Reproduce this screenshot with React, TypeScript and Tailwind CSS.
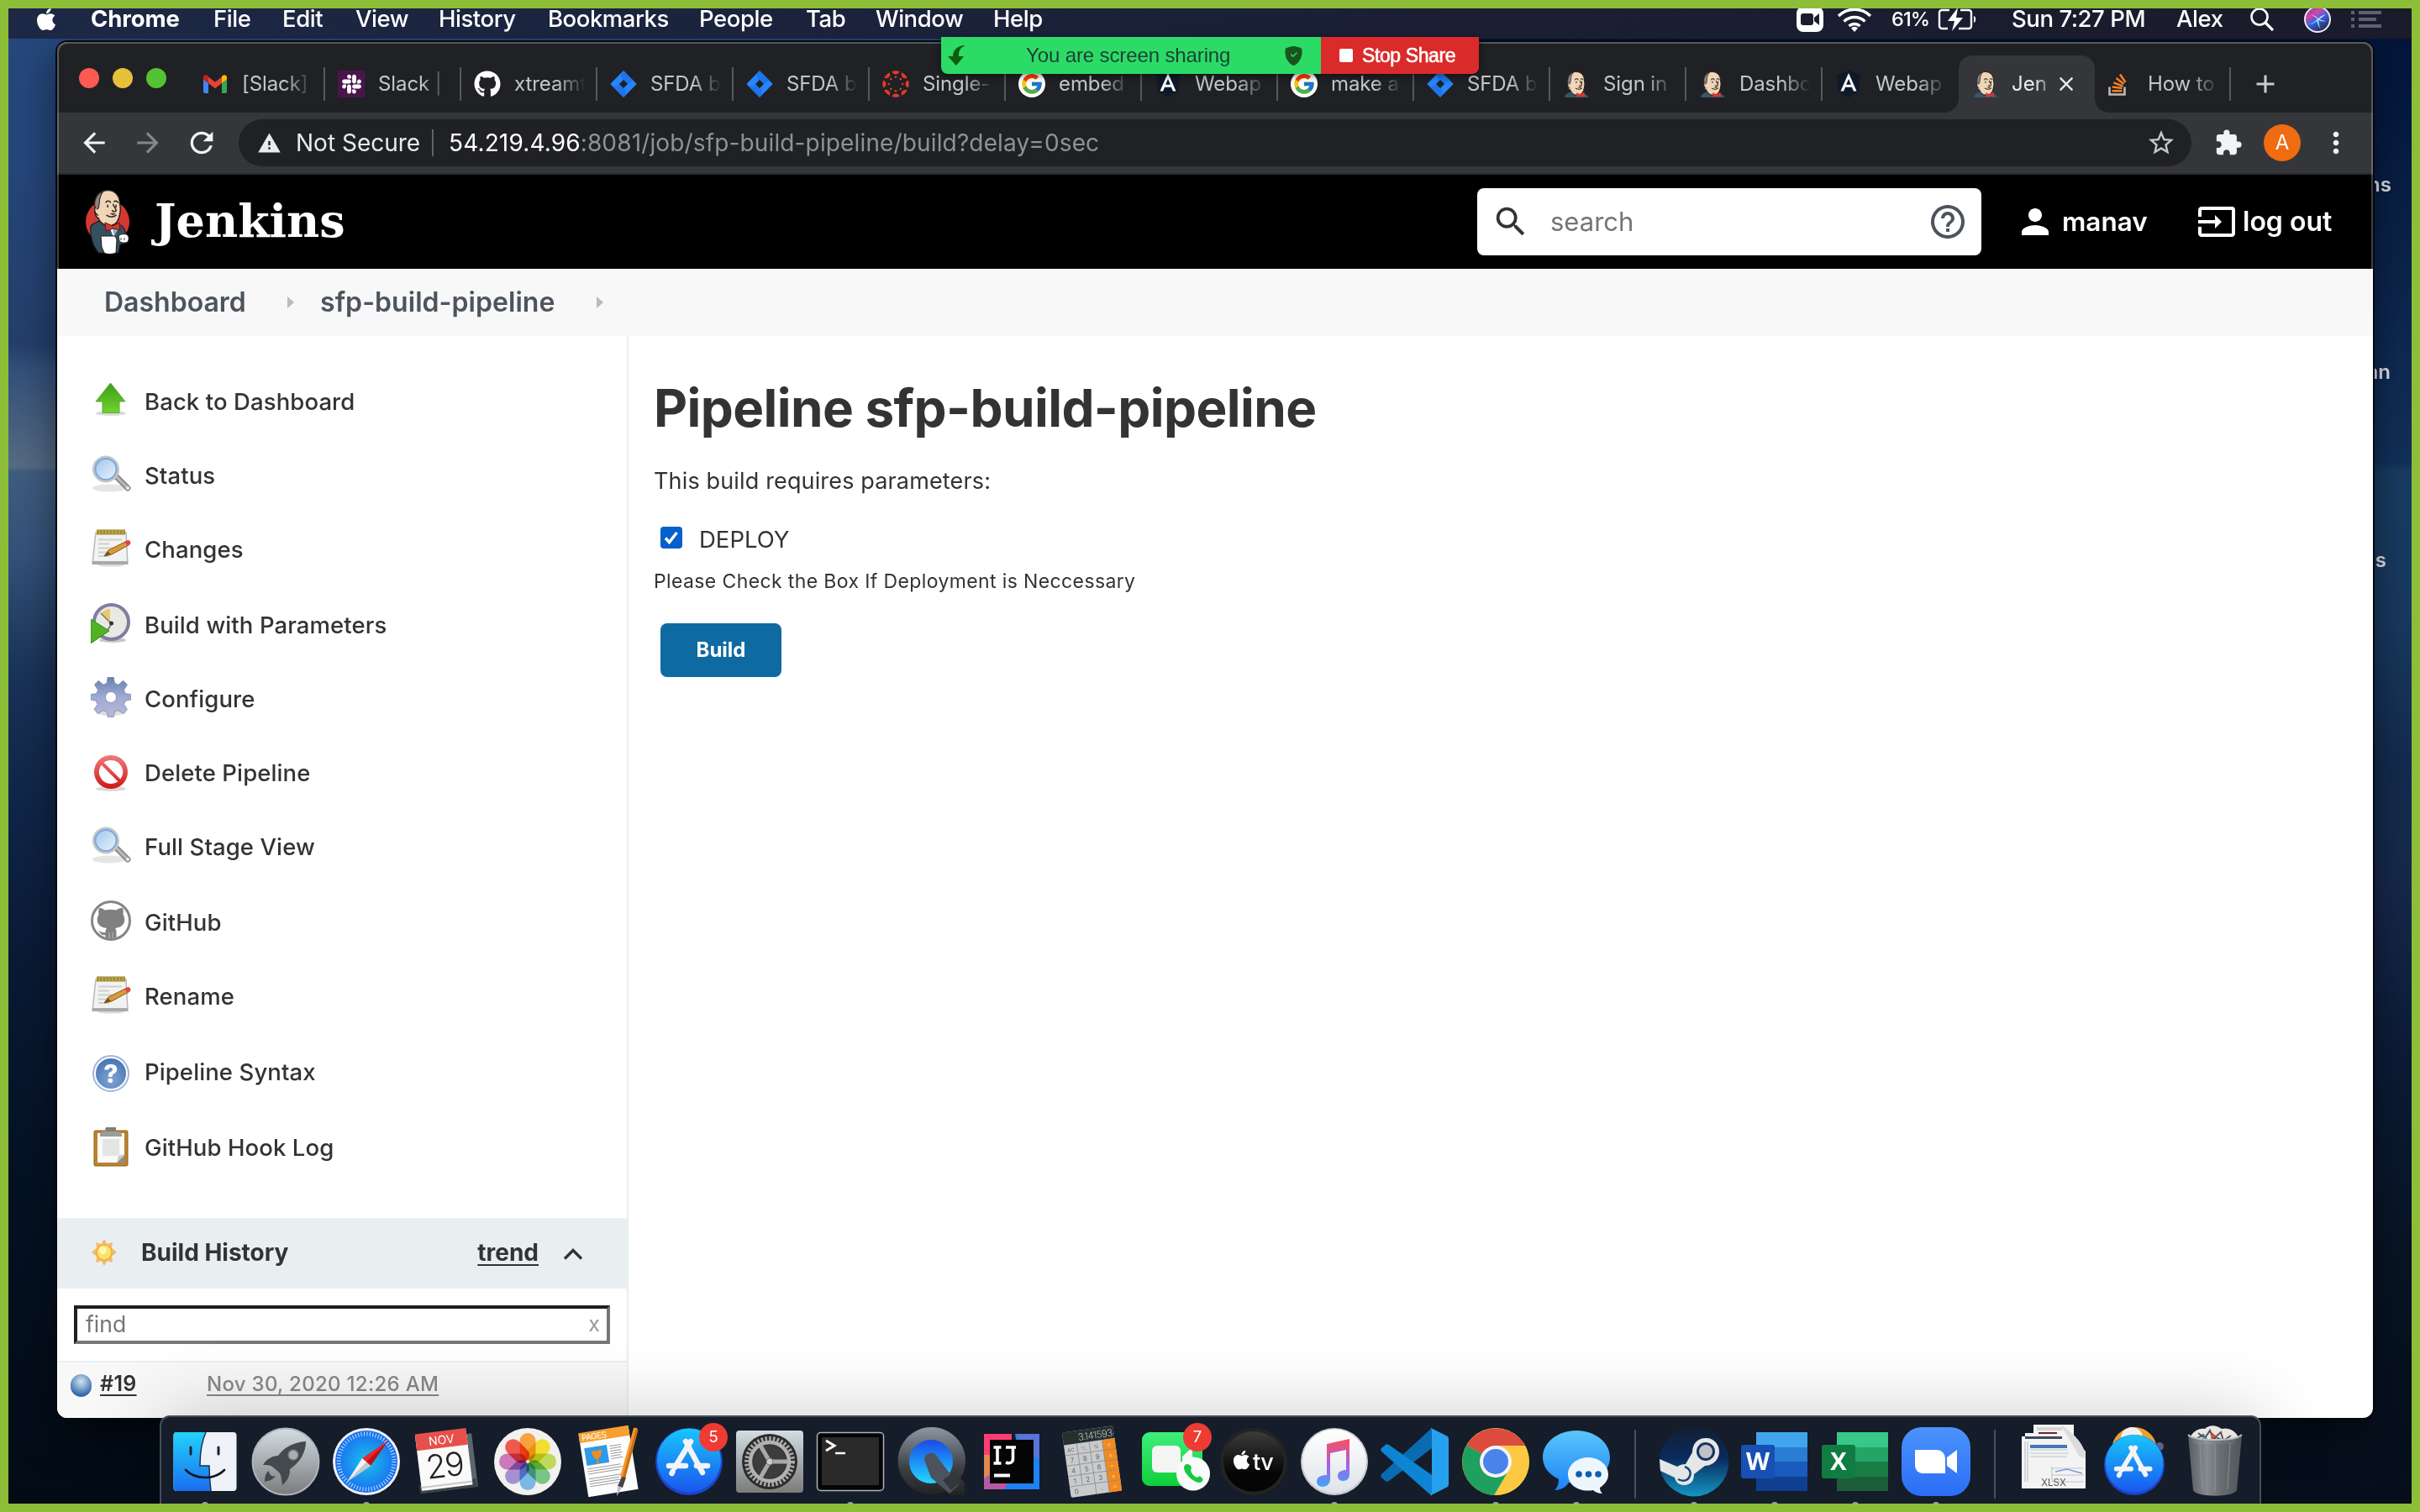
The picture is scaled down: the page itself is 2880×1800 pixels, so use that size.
import React from "react";
import { FaApple, FaGithub, FaSlack } from "react-icons/fa";
import { FcGoogle } from "react-icons/fc";
import {
  MdExtension,
  MdStarBorder,
  MdWarning,
  MdPerson,
  MdSearch,
  MdHelpOutline,
  MdInput,
  MdArrowBack,
  MdArrowForward,
  MdRefresh,
  MdClose,
  MdAdd,
  MdMoreVert,
} from "react-icons/md";
import { BsShieldFillCheck } from "react-icons/bs";

/* ---------- Small logos ---------- */

function ButlerHead() {
  return (
    <>
      <path d="M9 22c-3-8 1-19 11-20 9-1 15 5 15 14 1 4 1 8 0 12-1 6-4 11-9 12-6 1-12-2-14-8-3-1-5-6-3-10z" fill="#f0d6b7" stroke="#2b2320" strokeWidth="1.4" />
      <path d="M9 23c-3-8 0-17 8-20-3 4-4 8-4 12l-1 6z" fill="#8a8580" stroke="#2b2320" strokeWidth="1" />
      <path d="M9 20c-2 2-1 8 3 9" fill="#f0d6b7" stroke="#2b2320" strokeWidth="1.2" />
      <path d="M20 15c1-2 4-2 5 0M29 14c1-1 3-1 4 1M22 18v2M31 18v2M28 17c0 3 4 5 3 7-1 1-3 1-4 0M21 29c3 2 7 2 10 0" fill="none" stroke="#2b2320" strokeWidth="1.4" strokeLinecap="round" />
      <path d="M24 27c2-1 5-1 7 0l-3 2z" fill="#5a4a40" />
    </>
  );
}

function JenkinsFavicon() {
  return (
    <svg viewBox="0 0 44 44" className="h-8 w-8 shrink-0">
      <path d="M3 44c0-5 5-8 10-9l14 3 8 0c4 1 6 3 7 6z" fill="#34556b" />
      <ButlerHead />
      <path d="M22 36l7 3 6-4 1 8-6-1-7 2z" fill="#d33833" />
    </svg>
  );
}

function JenkinsLogo() {
  return (
    <svg viewBox="0 0 54 76" className="h-[76px] w-[54px] shrink-0">
      <ellipse cx="27" cy="38" rx="26" ry="26" fill="#d33833" />
      <path d="M7 43c3-3 7-5 11-6l18 3c7 1 11 4 12 9l2 14-8 2-2 10H16l-5-8c-3-7-5-17-4-24z" fill="#335061" stroke="#1c1a19" strokeWidth="1.2" />
      <g transform="translate(3 -1.500) scale(1.1)">
        <ButlerHead />
      </g>
      <path d="M29 44l5 12 7-12z" fill="#fff" />
      <path d="M33 45l2 11 4-11z" fill="#81b0c4" />
      <path d="M24 39l9 4 8-4 1 9-8-2-9 3z" fill="#d33833" stroke="#5a1512" strokeWidth="1" />
      <path d="M19 55h17l2 4-1 16c-5 2-10 2-14 0l-3-7z" fill="#fff" stroke="#1c1a19" strokeWidth="1" />
      <path d="M40 55c3-3 8-3 11-1 2 3 1 6 0 8-4 2-8 1-10-1z" fill="#fff" stroke="#1c1a19" strokeWidth="1" />
      <path d="M43 57v3M47 57v3" stroke="#1c1a19" strokeWidth=".8" />
    </svg>
  );
}

function GmailIcon() {
  return (
    <svg viewBox="0 0 32 32" className="h-8 w-8 shrink-0">
      <path d="M2 27V10l6 5v12H4a2 2 0 0 1-2-2z" fill="#4285f4" />
      <path d="M24 27V15l6-5v15a2 2 0 0 1-2 2z" fill="#34a853" />
      <path d="M8 7.500l8 6.200 8-6.200V15l-8 6.200L8 15z" fill="#ea4335" />
      <path d="M2 8.500C2 5.500 5 4.500 7 6l1 1v8l-6-4.500z" fill="#c5221f" />
      <path d="M30 8.500C30 5.500 27 4.500 25 6l-1 1v8l6-4.500z" fill="#fbbc04" />
    </svg>
  );
}

function JiraIcon() {
  return (
    <svg viewBox="0 0 32 32" className="h-8 w-8 shrink-0">
      <path d="M16 0l15 15.200a1 1 0 0 1 0 1.500L16 32 1 16.700a1 1 0 0 1 0-1.500z" fill="#2684ff" />
      <path d="M16 0c-4 5-3 9 0 12l4 4 8-4z" fill="#1868db" opacity=".55" />
      <path d="M16 32c4-5 3-9 0-12l-4-4-8 4z" fill="#1868db" opacity=".55" />
      <path d="M16 11l5 5-5 5-5-5z" fill="#202124" />
    </svg>
  );
}

function CanvasIcon() {
  const arcs = [0, 45, 90, 135, 180, 225, 270, 315];
  return (
    <svg viewBox="0 0 32 32" className="h-8 w-8 shrink-0">
      {arcs.map((a) => (
        <g key={a} transform={`rotate(${a} 16 16)`} fill="#e5392a">
          <path d="M11.500 1a16 16 0 0 1 9 0c-1 4.600-8 4.600-9 0z" />
          <circle cx="16" cy="7.800" r="1.300" />
        </g>
      ))}
    </svg>
  );
}

function AngularIcon() {
  return (
    <svg viewBox="0 0 32 32" className="h-8 w-8 shrink-0">
      <path d="M16 0l14 5-2 20-12 7L4 25 2 5z" fill="#0d1a2a" />
      <path d="M16 3L6.500 24.500h3.600l2-4.800h7.800l2 4.800h3.600zm0 7l2.900 6.800h-5.800z" fill="#fff" />
    </svg>
  );
}

function SlackTile() {
  return (
    <span className="flex h-8 w-8 shrink-0 items-center justify-center bg-[#4a154b]">
      <FaSlack className="h-[26px] w-[29px] text-white" />
    </span>
  );
}

function GoogleIcon() {
  return <FcGoogle className="h-8 w-8 shrink-0 rounded-full bg-white p-[2px]" />;
}

function StackIcon() {
  return (
    <svg viewBox="0 0 32 32" className="h-8 w-8 shrink-0">
      <path d="M2.500 19.500v9h18v-9" fill="none" stroke="#bcbbbb" strokeWidth="2.600" />
      <path d="M5.500 24.300h12M5.800 19.500l11.800 1.600M7.300 14.300l11 4.200M10.500 9l9 7M15 4.500l6.500 9.500" stroke="#f48024" strokeWidth="2.500" />
    </svg>
  );
}

/* ---------- Menu bar ---------- */

function MenuItem({ label, className }: { label: string; className: string }) {
  return <span className={`shrink-0 whitespace-nowrap ${className}`}>{label}</span>;
}

function MenuBar() {
  return (
    <div className="flex h-[46px] w-full items-start bg-gradient-to-r from-[#1c2845] via-[#1a2037] to-[#1a1b2a] pl-[40px] pr-[46px] text-[27.5px] font-medium tracking-[-0.45px] text-white">
      <div className="flex h-[45px] items-center">
        <FaApple className="mr-[38px] h-[30px] w-[30px] shrink-0" />
        <MenuItem label="Chrome" className="w-[146px] font-bold tracking-[-0.1px]" />
        <MenuItem label="File" className="w-[82px]" />
        <MenuItem label="Edit" className="w-[87px]" />
        <MenuItem label="View" className="w-[99px]" />
        <MenuItem label="History" className="w-[130px]" />
        <MenuItem label="Bookmarks" className="w-[180px]" />
        <MenuItem label="People" className="w-[127px]" />
        <MenuItem label="Tab" className="w-[83px]" />
        <MenuItem label="Window" className="w-[140px]" />
        <MenuItem label="Help" className="w-[80px]" />
      </div>
      <div className="ml-auto flex h-[45px] items-center">
        <svg viewBox="0 0 32 30" className="mr-[16px] h-[30px] w-8">
          <rect width="32" height="30" rx="8" fill="#fff" />
          <rect x="5" y="8" width="15" height="14" rx="3" fill="#1a1d30" />
          <path d="M21 13l6-5v14l-6-5z" fill="#1a1d30" />
        </svg>
        <svg viewBox="0 0 42 30" className="mr-[23px] h-[30px] w-[42px]">
          <path d="M2 11a27 27 0 0 1 38 0M8.500 17.500a18 18 0 0 1 25 0M14.500 23a9.500 9.500 0 0 1 13 0" fill="none" stroke="#fff" strokeWidth="3.400" />
          <path d="M21 30l-4-4.500a5.500 5.500 0 0 1 8 0z" fill="#fff" />
        </svg>
        <span className="mr-[10px] w-[45px] whitespace-nowrap text-[23.5px] tracking-[-0.9px]">61%</span>
        <svg viewBox="0 0 46 28" className="mr-[42px] h-7 w-[46px]">
          <path d="M14 3H5a3 3 0 0 0-3 3v16a3 3 0 0 0 3 3h7M27 3h10a3 3 0 0 1 3 3v16a3 3 0 0 1-3 3H25" fill="none" stroke="#fff" strokeWidth="2.400" />
          <path d="M24 0L12 16h8l-3 12 13-16h-8z" fill="#fff" />
          <path d="M43 10c3 1 3 7 0 8z" fill="#fff" />
        </svg>
        <span className="w-[196px] whitespace-nowrap">Sun 7:27 PM</span>
        <span className="w-[88px] whitespace-nowrap">Alex</span>
        <svg viewBox="0 0 28 28" className="mr-[36px] h-7 w-7">
          <circle cx="11" cy="11" r="9.500" fill="none" stroke="#fff" strokeWidth="2.600" />
          <path d="M18 18l9 9" stroke="#fff" strokeWidth="3.200" />
        </svg>
        <svg viewBox="0 0 32 32" className="mr-[24px] h-8 w-8">
          <defs>
            <linearGradient id="siri" x1="0" y1="0" x2=".6" y2="1">
              <stop offset="0" stopColor="#5a2fd0" />
              <stop offset=".35" stopColor="#d8459c" />
              <stop offset=".6" stopColor="#3a60e8" />
              <stop offset="1" stopColor="#2a2a50" />
            </linearGradient>
          </defs>
          <circle cx="16" cy="16" r="15" fill="url(#siri)" stroke="#eceaf4" strokeWidth="2" />
          <path d="M5 22c6-1 9-4 11-7 3 1 7 3 11 3-5 1-8 0-10-1 1 4 1 8 3 11-3-4-4-7-5-10-3 3-6 4-10 4z" fill="#7ff0f0" />
          <path d="M17 5c0 4-1 8-1 11 2-3 6-5 10-6-3 3-7 5-9 7-2-3-5-5-9-6 3 0 6 1 8 3z" fill="#f4d6ff" opacity=".85" />
        </svg>
        <svg viewBox="0 0 36 22" className="h-[22px] w-9" fill="#5c6174">
          <path d="M0 1h4v4H0zM9 1h27v4H9zM0 9h4v4H0zM9 9h21v4H9zM0 17h4v4H0zM9 17h27v4H9z" />
        </svg>
      </div>
    </div>
  );
}

/* ---------- Browser ---------- */

const tabs: { icon: React.ReactNode; title: string }[] = [
  { icon: <GmailIcon />, title: "[Slack]" },
  { icon: <SlackTile />, title: "Slack |" },
  { icon: <FaGithub className="h-8 w-8 shrink-0 text-white" />, title: "xtreamt" },
  { icon: <JiraIcon />, title: "SFDA b" },
  { icon: <JiraIcon />, title: "SFDA b" },
  { icon: <CanvasIcon />, title: "Single-" },
  { icon: <GoogleIcon />, title: "embed" },
  { icon: <AngularIcon />, title: "Webap" },
  { icon: <GoogleIcon />, title: "make a" },
  { icon: <JiraIcon />, title: "SFDA b" },
  { icon: <JenkinsFavicon />, title: "Sign in" },
  { icon: <JenkinsFavicon />, title: "Dashbo" },
];

function TabTitle({ title }: { title: string }) {
  return (
    <span className="ml-4 w-[92px] shrink-0 whitespace-nowrap text-[24px] tracking-[-0.1px] text-[#c3c6ca] [mask-image:linear-gradient(to_right,#000_55%,transparent_92%)]">
      {title}
    </span>
  );
}

function Tab({ icon, title, last }: { icon: React.ReactNode; title: string; last?: boolean }) {
  return (
    <div className="flex h-[68px] w-[162px] shrink-0 items-center pl-[15px]">
      {icon}
      <TabTitle title={title} />
      {!last && <span className="ml-auto h-10 w-[2px] shrink-0 bg-[#56585c]" />}
    </div>
  );
}

function TabStrip() {
  return (
    <div className="flex h-[84px] items-end bg-[#202124] pl-[26px]">
      <div className="mb-[29px] flex gap-4">
        <span className="h-6 w-6 rounded-full bg-[#ff5a52]" />
        <span className="h-6 w-6 rounded-full bg-[#e6c03a]" />
        <span className="h-6 w-6 rounded-full bg-[#53c234]" />
      </div>
      <div className="ml-[27px] flex">
        {tabs.map((t, i) => (
          <Tab key={i} icon={t.icon} title={t.title} />
        ))}
        <Tab icon={<AngularIcon />} title="Webap" last />
        <div className="relative flex h-[68px] w-[162px] shrink-0 items-center rounded-t-2xl bg-[#35363a] pl-[16px]">
          <span className="absolute -left-4 bottom-0 h-4 w-4 bg-[radial-gradient(circle_at_0_0,#202124_15.5px,#35363a_16px)]" />
          <span className="absolute -right-4 bottom-0 h-4 w-4 bg-[radial-gradient(circle_at_100%_0,#202124_15.5px,#35363a_16px)]" />
          <JenkinsFavicon />
          <span className="ml-[15px] w-[44px] whitespace-nowrap text-[24px] text-[#e8eaed] [mask-image:linear-gradient(to_right,#000_65%,transparent_115%)]">
            Jen
          </span>
          <MdClose className="ml-[7px] h-[28px] w-[28px] text-[#e8eaed]" />
        </div>
        <Tab icon={<StackIcon />} title="How to" />
      </div>
      <MdAdd className="mb-[16px] ml-[23px] h-9 w-9 text-[#c9ccd0]" />
    </div>
  );
}

function Toolbar() {
  return (
    <div className="flex h-[74px] items-start border-b-2 border-[#28292c] bg-[#35363a] text-[28px]">
      <div className="flex h-[72px] w-full items-center pl-[25px]">
        <MdArrowBack className="h-[38px] w-[38px] text-[#f1f3f4]" />
        <MdArrowForward className="ml-[26px] h-[38px] w-[38px] text-[#85878a]" />
        <MdRefresh className="ml-[25px] h-[40px] w-[40px] text-[#f1f3f4]" />
        <div className="ml-[24px] flex h-14 w-[2324px] items-center rounded-full bg-[#202124] pl-[22px]">
          <MdWarning className="h-[29px] w-[29px] text-[#e8eaed]" />
          <span className="ml-[17px] w-[147px] whitespace-nowrap text-[#e8eaed]">Not Secure</span>
          <span className="ml-[15px] h-8 w-[2px] bg-[#5f6368]" />
          <span className="ml-[18px] whitespace-nowrap tracking-[0.14px] text-[#8f9296]">
            <span className="text-white">54.219.4.96</span>:8081/job/sfp-build-pipeline/build?delay=0sec
          </span>
          <MdStarBorder className="ml-auto mr-[18px] h-9 w-9 text-[#c4c7ca]" />
        </div>
        <MdExtension className="ml-[27px] h-[34px] w-[34px] text-[#f1f3f4]" />
        <span className="ml-[25px] flex h-11 w-11 items-center justify-center rounded-full bg-[#ef6c11] text-[24px] text-white">A</span>
        <MdMoreVert className="ml-[22px] h-10 w-10 text-[#f1f3f4]" />
      </div>
    </div>
  );
}

/* ---------- Jenkins page ---------- */

function JenkinsHeader() {
  return (
    <div className="flex h-[112px] items-center bg-black text-white">
      <div className="flex items-center pl-[33px]">
        <JenkinsLogo />
        <span className="-mt-[2px] ml-[29px] whitespace-nowrap font-['DejaVu_Serif',serif] text-[54px] font-bold leading-[60px]">
          Jenkins
        </span>
      </div>
      <div className="ml-auto flex h-20 w-[600px] items-center rounded-lg bg-white pl-[17px] pr-[16px]">
        <MdSearch className="h-[46px] w-[46px] text-[#333]" />
        <span className="ml-[24px] text-[31px] text-[#757575]">search</span>
        <MdHelpOutline className="ml-auto h-[48px] w-[48px] text-[#4d545d]" />
      </div>
      <div className="ml-[40px] flex w-[218px] items-center">
        <MdPerson className="h-12 w-12" />
        <span className="ml-[8px] text-[31.5px] font-semibold">manav</span>
      </div>
      <div className="flex w-[208px] items-center">
        <MdInput className="-ml-[2px] h-12 w-12" />
        <span className="ml-[7px] whitespace-nowrap text-[32px] font-semibold">log out</span>
      </div>
    </div>
  );
}

function Breadcrumbs() {
  return (
    <div className="flex h-20 items-center bg-[#f8f8f8] pl-[56px] text-[32px] font-semibold text-[#4d545d]">
      <span className="w-[218px]">Dashboard</span>
      <svg viewBox="0 0 8 14" className="h-[14px] w-2" fill="#bbb"><path d="M0 0l8 7-8 7z" /></svg>
      <span className="ml-[31px] w-[329px] whitespace-nowrap tracking-[0.05px]">sfp-build-pipeline</span>
      <svg viewBox="0 0 8 14" className="h-[14px] w-2" fill="#bbb"><path d="M0 0l8 7-8 7z" /></svg>
    </div>
  );
}

const icon48 = "h-12 w-12 shrink-0 -translate-y-[2px]";

function UpArrow() {
  return (
    <svg viewBox="0 0 48 48" className={icon48}>
      <defs>
        <linearGradient id="up" x1="0" y1="0" x2="0" y2="1">
          <stop offset="0" stopColor="#3f9b1c" />
          <stop offset="1" stopColor="#6fd52a" />
        </linearGradient>
      </defs>
      <ellipse cx="24" cy="40" rx="18" ry="3" fill="#000" opacity=".14" />
      <path d="M23.500 4L41 26h-7v13.500H14V26H6z" fill="url(#up)" stroke="#5aa83a" strokeWidth="1" />
    </svg>
  );
}

function Magnifier() {
  return (
    <svg viewBox="0 0 48 48" className={icon48}>
      <defs>
        <linearGradient id="lens" x1="0" y1="0" x2="1" y2="1">
          <stop offset="0" stopColor="#9cc4ec" />
          <stop offset="1" stopColor="#eef5fd" />
        </linearGradient>
      </defs>
      <ellipse cx="22" cy="41" rx="20" ry="4.500" fill="#000" opacity=".1" />
      <path d="M31 28l13 13" stroke="#8c8c8c" strokeWidth="7" strokeLinecap="round" />
      <path d="M30 27l13 13" stroke="#b9b9b9" strokeWidth="3" strokeLinecap="round" />
      <circle cx="44" cy="41" r="2" fill="#eee" />
      <circle cx="18" cy="18.500" r="14" fill="url(#lens)" stroke="#c4c6c8" strokeWidth="4" />
      <circle cx="18" cy="18.500" r="12.500" fill="none" stroke="#7ba7dc" strokeWidth="2" />
    </svg>
  );
}

function Notepad() {
  return (
    <svg viewBox="0 0 48 48" className={icon48}>
      <ellipse cx="24" cy="44.500" rx="16" ry="2" fill="#000" opacity=".15" />
      <path d="M6 6h36l2 37H2z" fill="#f2f2f2" stroke="#b8b8b8" strokeWidth="1.500" />
      <path d="M2 40h42v4H2z" fill="#a9a9a9" />
      <path d="M7 2.500h34v6H7z" fill="#a08c36" />
      <path d="M10 2v7M14 2v7M18 2v7M22 2v7M26 2v7M30 2v7M34 2v7M38 2v7" stroke="#c4b25c" strokeWidth="1.200" />
      <path d="M9 14.500h28M9 19.500h13M9 24.500h18M9 29.500h9M9 34h13" stroke="#cfcfcf" strokeWidth="1.800" />
      <path d="M16 34l5-7 20-10 4 4-20 11z" fill="#d9983c" stroke="#8a5a18" strokeWidth="1" />
      <path d="M40 17l4-2c3 0 4 3 3 5l-3 2z" fill="#e04343" />
      <path d="M16 34l4-6 4 4z" fill="#6b5527" />
    </svg>
  );
}

function BuildClock() {
  return (
    <svg viewBox="0 0 48 48" className={icon48}>
      <ellipse cx="26" cy="44" rx="16" ry="3" fill="#000" opacity=".22" />
      <circle cx="24.500" cy="22.500" r="20.500" fill="#e9e9e4" stroke="#7f7da0" strokeWidth="4" />
      <path d="M23 23L12 12c3-3 7-5 11-5z" fill="#e6ca6a" />
      <path d="M12 12l12 12" stroke="#777" strokeWidth="1.500" />
      <circle cx="24.500" cy="24" r="2.500" fill="#333" />
      <path d="M24 26l-4 6" stroke="#666" strokeWidth="1.500" />
      <path d="M0 19l22 14L0 48z" fill="#4fb324" stroke="#378a14" strokeWidth="1" />
    </svg>
  );
}

function Gear() {
  return (
    <svg viewBox="0 0 48 48" className={icon48}>
      <defs>
        <linearGradient id="gear" x1="0" y1="0" x2="0" y2="48" gradientUnits="userSpaceOnUse">
          <stop offset="0" stopColor="#6680ae" />
          <stop offset=".5" stopColor="#9eabd4" />
          <stop offset="1" stopColor="#bbb7d8" />
        </linearGradient>
      </defs>
      <ellipse cx="24" cy="42" rx="18" ry="4" fill="#000" opacity=".13" />
      <path
        d="M20.200 0h7l1.300 7.200 4.400 2 5.600-5 5 4.800-4 6.500 1.700 4.300 6.800.7v6.500l-6.500 1.300-2 4.200 4 6-4.800 5-6.200-3.800-4 1.700-1.200 6.100h-7l-1.200-6.100-4.200-1.700-6.200 3.800-4.700-5 4-6-2-4.200L0 27v-6.500l6.800-.7 1.700-4.300-4-6.500 4.800-4.800 5.700 5 4.200-2zM24 17.500a6.500 6.500 0 1 0 0 13 6.500 6.500 0 0 0 0-13z"
        fill="url(#gear)"
        fillRule="evenodd"
        stroke="#7d88b0"
        strokeWidth=".8"
      />
    </svg>
  );
}

function NoEntry() {
  return (
    <svg viewBox="0 0 48 48" className={icon48}>
      <defs>
        <linearGradient id="no" x1="0" y1="0" x2="0" y2="1">
          <stop offset="0" stopColor="#ee7b7b" />
          <stop offset="1" stopColor="#cf1717" />
        </linearGradient>
      </defs>
      <ellipse cx="24" cy="45" rx="18" ry="3" fill="#000" opacity=".15" />
      <path d="M24 5a20 20 0 1 0 0 40 20 20 0 0 0 0-40zm0 6c3 0 6 1 8.600 2.800L12.800 33.600A14 14 0 0 1 24 11zm0 28c-3 0-6-1-8.300-2.700l19.600-19.600A14 14 0 0 1 24 39z" transform="matrix(-1 0 0 1 48 0)" fill="url(#no)" />
    </svg>
  );
}

function OctocatBadge() {
  return (
    <span className="flex h-12 w-12 shrink-0 -translate-y-[2px] items-center justify-center overflow-hidden rounded-full border-[3px] border-[#858585] bg-white">
      <svg viewBox="0 0 42 42" className="h-[42px] w-[42px]" fill="#808080">
        <path d="M7 6c3-.500 5 1 7 2.500 4-1 9-1 13 0C29 7 32 5.500 35 6c1 3 1 5 .5 7.500C40 22 36 29 26 30c1.500 2 1.500 4 1.500 5v7h-13v-4c-5 1-6-2-8-5 2 0 3 3 8 2 0-2 .5-4 1.500-5C6 29 2 22 6.500 13.500 6 11 6 9 7 6z" />
        <path d="M19 35v7M23 35v7" stroke="#bbb" strokeWidth="1" />
      </svg>
    </span>
  );
}

function HelpBadge() {
  return (
    <span className="flex h-12 w-12 shrink-0 translate-y-[2px] items-center justify-center">
      <span className="flex h-[44px] w-[44px] items-center justify-center rounded-full border-2 border-[#9db6d8] bg-white p-[2px]">
        <span className="flex h-full w-full items-center justify-center rounded-full bg-[radial-gradient(circle_at_50%_70%,#7fa6d8,#3c67a8)] text-[30px] font-extrabold text-white">?</span>
      </span>
    </span>
  );
}

function Clipboard() {
  return (
    <svg viewBox="0 0 48 48" className="h-12 w-12 shrink-0">
      <rect x="4" y="4" width="40" height="42" rx="1.500" fill="#b9822f" stroke="#946216" strokeWidth="1" />
      <path d="M8 7h32v35H8z" fill="#fafafa" />
      <path d="M14 14h20v20H14z" fill="#e4e4e4" />
      <path d="M40 33l-9 9h9z" fill="#8d8f8a" />
      <path d="M31 42l2-8 7-2z" fill="#c9cac6" />
      <path d="M11 9c0-3 3-4 6-4V1h13v4c3 0 7 1 7 4v2H11z" fill="#9a9d96" />
      <path d="M18 0h12v5H18z" fill="#7d8078" />
    </svg>
  );
}

const sideLinks: { label: string; icon: React.ReactNode; gap?: boolean }[] = [
  { label: "Back to Dashboard", icon: <UpArrow /> },
  { label: "Status", icon: <Magnifier /> },
  { label: "Changes", icon: <Notepad /> },
  { label: "Build with Parameters", icon: <BuildClock />, gap: true },
  { label: "Configure", icon: <Gear /> },
  { label: "Delete Pipeline", icon: <NoEntry /> },
  { label: "Full Stage View", icon: <Magnifier /> },
  { label: "GitHub", icon: <OctocatBadge />, gap: true },
  { label: "Rename", icon: <Notepad /> },
  { label: "Pipeline Syntax", icon: <HelpBadge />, gap: true },
  { label: "GitHub Hook Log", icon: <Clipboard />, gap: true },
];

function Sidebar() {
  return (
    <aside className="flex w-[680px] shrink-0 flex-col border-r-2 border-[#e9eef1]">
      <nav className="flex h-[1050px] flex-col pt-[34px]">
        {sideLinks.map((l) => (
          <a key={l.label} className={`flex h-[88px] shrink-0 items-center pl-10 text-[27.5px] font-medium tracking-[0.1px] text-[#333] ${l.gap ? "mt-[2px]" : ""}`}>
            {l.icon}
            <span className="ml-4 mt-[2px] whitespace-nowrap">{l.label}</span>
          </a>
        ))}
      </nav>
      <div className="flex h-[84px] shrink-0 items-center bg-[#e9eff1] pb-[2px] text-[28px] font-bold text-[#333]">
        <svg viewBox="0 0 32 32" className="ml-[40px] h-8 w-8">
          <path d="M16 0l3.500 6L26 4l-1 6.500 6 5.500-6 4.500 1 7.500-6.500-2L16 32l-3.500-6L6 28l1-7.500L1 16l6-5.500L6 4l6.500 2z" fill="#f6b25c" opacity=".9" />
          <circle cx="16" cy="16" r="9" fill="#fbe36a" stroke="#f2a33c" strokeWidth="1.200" />
          <circle cx="14.500" cy="13.500" r="4.500" fill="#fff6b4" />
        </svg>
        <span className="ml-[28px]">Build History</span>
        <span className="ml-auto underline decoration-2 underline-offset-4">trend</span>
        <svg viewBox="0 0 24 14" className="ml-[29px] mr-[52px] mt-1 h-[14px] w-6">
          <path d="M2 12.500L12 2.500l10 10" fill="none" stroke="#333" strokeWidth="3.400" />
        </svg>
      </div>
      <div className="flex h-[86px] shrink-0 items-start px-5 pt-5">
        <div className="flex h-[46px] w-full items-center border-4 border-b-[#767676] border-l-[#1f1f1f] border-r-[#767676] border-t-[#1f1f1f] bg-white pl-[10px] pr-[8px] text-[26.5px] text-[#757575]">
          <span>find</span>
          <span className="ml-auto text-[25px] text-[#999]">x</span>
        </div>
      </div>
      <div className="flex flex-1 items-start border-t-2 border-[#e9eef1] bg-[#f8f8f8]">
        <div className="flex h-[52px] items-center text-[24px] font-medium">
          <span className="ml-4 mt-[3px] h-[27px] w-[25px] rounded-full bg-[radial-gradient(circle_at_50%_32%,#d5e4ee_0%,#7ba3cd_40%,#2f64a8_75%,#6d8db5_100%)]" />
          <span className="ml-[10px] w-[127px] text-[25px] font-semibold tracking-[0.3px] text-[#333] underline decoration-2 underline-offset-4">#19</span>
          <span className="whitespace-nowrap tracking-[0.3px] text-[#888] underline decoration-2 underline-offset-4">Nov 30, 2020 12:26 AM</span>
        </div>
      </div>
    </aside>
  );
}

function MainPanel() {
  return (
    <main className="flex flex-1 flex-col items-start pl-[30px] pt-[54px] text-[#333]">
      <h1 className="whitespace-nowrap text-[62px] font-bold leading-[64px] tracking-[-0.6px]">Pipeline sfp-build-pipeline</h1>
      <p className="mt-[35px] text-[27px] leading-10 tracking-[0.15px]">This build requires parameters:</p>
      <label className="mt-[30px] flex h-10 items-center pl-2 text-[27.5px]">
        <span className="-mt-[7px] flex h-[26px] w-[26px] items-center justify-center rounded-[4px] bg-[#055fcc]">
          <svg viewBox="0 0 20 20" className="h-5 w-5">
            <path d="M3 10.500l4.500 5L16.500 4" fill="none" stroke="#fff" strokeWidth="3.400" />
          </svg>
        </span>
        <span className="ml-[20px]">DEPLOY</span>
      </label>
      <p className="mt-[13px] whitespace-nowrap text-[23px] leading-8 tracking-[0.38px]">Please Check the Box If Deployment is Neccessary</p>
      <button className="ml-2 mt-[34px] flex h-16 w-36 items-center justify-center rounded-lg bg-[#106aa2] text-[24px] font-bold text-white">Build</button>
    </main>
  );
}

function BrowserWindow() {
  return (
    <div className="absolute left-[68px] top-[50px] flex h-[1638px] w-[2756px] flex-col overflow-hidden rounded-[12px] bg-white">
      <TabStrip />
      <Toolbar />
      <JenkinsHeader />
      <Breadcrumbs />
      <div className="flex min-h-0 flex-1">
        <Sidebar />
        <MainPanel />
      </div>
      <div className="pointer-events-none absolute inset-x-0 top-0 h-[270px] rounded-t-[12px] border-x-2 border-t-2 border-white/25" />
    </div>
  );
}

/* ---------- Screen sharing banner ---------- */

function ShareBanner() {
  return (
    <div className="absolute left-[1120px] top-[44px] flex h-11 w-[640px] overflow-hidden rounded-b-lg font-['Liberation_Sans',sans-serif] text-[24px] shadow-[0_2px_8px_rgba(0,0,0,0.5)]">
      <div className="flex w-[452px] items-center bg-[#2bdb65] text-[#1d3f38]">
        <svg viewBox="0 0 22 24" className="ml-[8px] h-6 w-[22px]" fill="#0c5c10">
          <path d="M21 0c-7 3-8 7-8 13h6L10 24 0 13h6C6 6 11 0 21 0z" />
        </svg>
        <span className="ml-[71px] w-[244px] whitespace-nowrap tracking-[-0.12px]">You are screen sharing</span>
        <BsShieldFillCheck className="ml-[63px] h-[23px] w-[23px] text-[#17571f]" />
      </div>
      <div className="flex flex-1 items-center bg-[#db2a2a] text-white">
        <span className="ml-[22px] h-4 w-4 rounded-[2px] bg-white" />
        <span className="ml-[11px] whitespace-nowrap text-[23px] tracking-[-0.4px] [-webkit-text-stroke:0.6px_white]">Stop Share</span>
      </div>
    </div>
  );
}

/* ---------- Dock icons ---------- */

function AppStoreGlyph() {
  return (
    <g stroke="#f2f4f8" strokeWidth="6.500" strokeLinecap="round" fill="none">
      <path d="M44 20L25 51M22.500 56l-1 2" />
      <path d="M38 20l20 37" />
      <path d="M18 49h20M51 49h13" />
    </g>
  );
}

function Defs() {
  return (
    <svg className="absolute h-0 w-0">
      <defs>
        <linearGradient id="blueV" x1="0" y1="0" x2="0" y2="1"><stop offset="0" stopColor="#19c6fb" /><stop offset="1" stopColor="#1a56ee" /></linearGradient>
        <linearGradient id="greyV" x1="0" y1="0" x2="0" y2="1"><stop offset="0" stopColor="#d2dde2" /><stop offset="1" stopColor="#7b7b7b" /></linearGradient>
        <radialGradient id="safari"><stop offset="0" stopColor="#19c3ec" /><stop offset="1" stopColor="#1a6df0" /></radialGradient>
        <linearGradient id="qt" x1="0" y1="0" x2="0" y2="1"><stop offset="0" stopColor="#8d96a3" /><stop offset=".6" stopColor="#3c4045" /><stop offset="1" stopColor="#222" /></linearGradient>
        <linearGradient id="qtIn" x1="0" y1="0" x2="0" y2="1"><stop offset="0" stopColor="#1a49e8" /><stop offset="1" stopColor="#22d8ff" /></linearGradient>
        <linearGradient id="ft" x1="0" y1="0" x2="0" y2="1"><stop offset="0" stopColor="#3fee7c" /><stop offset="1" stopColor="#0fcf3a" /></linearGradient>
        <linearGradient id="tv" x1="0" y1="0" x2="0" y2="1"><stop offset="0" stopColor="#3c3c3c" /><stop offset=".7" stopColor="#050505" /></linearGradient>
        <linearGradient id="note" x1="0" y1="0" x2="0" y2="1"><stop offset="0" stopColor="#f9505c" /><stop offset=".55" stopColor="#a860e8" /><stop offset="1" stopColor="#3aa8f8" /></linearGradient>
        <linearGradient id="wh" x1="0" y1="0" x2="0" y2="1"><stop offset="0" stopColor="#fff" /><stop offset="1" stopColor="#dfe3e8" /></linearGradient>
        <linearGradient id="msg" x1="0" y1="0" x2="0" y2="1"><stop offset="0" stopColor="#5ac6fa" /><stop offset="1" stopColor="#1b83f8" /></linearGradient>
        <linearGradient id="steam" x1="0" y1="0" x2="0" y2="1"><stop offset="0" stopColor="#131f33" /><stop offset=".45" stopColor="#0a2a5c" /><stop offset="1" stopColor="#1397c4" /></linearGradient>
        <linearGradient id="zm" x1="0" y1="0" x2="0" y2="1"><stop offset="0" stopColor="#4a93fc" /><stop offset="1" stopColor="#2b6df6" /></linearGradient>
        <linearGradient id="trash" x1="0" y1="0" x2="1" y2="0"><stop offset="0" stopColor="#5b6063" /><stop offset=".35" stopColor="#8c9194" /><stop offset=".6" stopColor="#6d7275" /><stop offset="1" stopColor="#53585b" /></linearGradient>
        <linearGradient id="finder" x1="0" y1="0" x2="0" y2="1"><stop offset="0" stopColor="#22d3fb" /><stop offset="1" stopColor="#1b6df0" /></linearGradient>
      </defs>
    </svg>
  );
}

function Svg({ children }: { children: React.ReactNode }) {
  return <svg viewBox="0 0 84 88" className="h-[88px] w-[84px] overflow-visible">{children}</svg>;
}

/* Each icon is drawn on an 84×88 board whose centre is (42,44). */

const Finder = () => (
  <Svg>
    <rect x="4.500" y="9" width="75" height="70" rx="4" fill="#eef2f8" />
    <path d="M43 9H8.500a4 4 0 0 0-4 4v62a4 4 0 0 0 4 4H49c-1-8-2-17-2-30H36c0-15 2-29 7-40z" fill="url(#finder)" />
    <path d="M43 9c-5 11-7 25-7 40h11c0 13 1 22 2 30" fill="none" stroke="#1d2f4d" strokeWidth="1.500" />
    <path d="M25 27v8M58 27v8" stroke="#16202e" strokeWidth="3" strokeLinecap="round" />
    <path d="M19 54c12 12 34 12 46 0" fill="none" stroke="#111823" strokeWidth="2.600" strokeLinecap="round" />
  </Svg>
);

const Launchpad = () => (
  <Svg>
    <circle cx="42" cy="44" r="39.500" fill="url(#greyV)" stroke="#aab6bc" strokeWidth="2" />
    <path d="M66 20c-15 1-26 7-33 17-7 0-14 4-18 11 5 0 8 0 11 2l1 1c4 3 8 6 9 9 1 4 1 7 2 12 6-5 9-11 9-19 12-8 19-20 19-33z" fill="#44494d" />
    <circle cx="51" cy="36" r="6" fill="#a5afb4" stroke="#70787c" strokeWidth="1.500" />
    <path d="M22 55c-4 2-5 8-5 13 6-1 10-3 13-7-3 1-5 0-6-1s-2-3-2-5z" fill="#44494d" />
  </Svg>
);

const Safari = () => (
  <Svg>
    <circle cx="42" cy="44" r="40" fill="#eef1f5" />
    <circle cx="42" cy="44" r="37" fill="url(#safari)" />
    <circle cx="42" cy="44" r="33" fill="none" stroke="#c9e4fa" strokeWidth="5" strokeDasharray="1 2.460" />
    <path d="M68 19L47 49l-10-9z" fill="#e8262a" />
    <path d="M68 19L47 49l-5-4.500z" fill="#b51418" />
    <path d="M19 68l18-28 10 9z" fill="#f4f4f4" />
    <path d="M19 68l28-19-5-4.500z" fill="#c4c8cc" />
  </Svg>
);

const Calendar = () => (
  <Svg>
    <g transform="rotate(-7 42 44)">
      <rect x="8" y="14" width="67" height="64" fill="#5b656c" />
      <rect x="6" y="68" width="68" height="10" fill="#3d4449" />
      <rect x="8" y="9" width="61" height="66" rx="1" fill="#fafafa" />
      <rect x="8" y="70" width="61" height="2" fill="#c5c8ca" />
      <rect x="8" y="7" width="61" height="20" fill="#e6504b" />
      <text x="38.500" y="22.500" textAnchor="middle" className="font-['Inter',sans-serif] text-[14px]" fill="#fff">NOV</text>
      <text x="38.500" y="62" textAnchor="middle" className="font-['Inter',sans-serif] text-[39px] font-light" fill="#222" letterSpacing="-1.500">29</text>
    </g>
  </Svg>
);

const petals: [number, string][] = [
  [0, "#f79a2c"], [45, "#f2dc1c"], [90, "#b9d64a"], [135, "#6cc07a"], [180, "#6cb3e4"], [225, "#9a86cf"], [270, "#c86bb0"], [315, "#f0483e"],
];

const Photos = () => (
  <Svg>
    <circle cx="42" cy="44" r="40" fill="#f1f1ef" />
    <g className="isolate">
      {petals.map(([a, c]) => (
        <rect key={a} x="32.500" y="10" width="19" height="33" rx="9.500" fill={c} opacity=".9" className="mix-blend-multiply" transform={`rotate(${a} 42 44)`} />
      ))}
    </g>
    <circle cx="42" cy="44" r="1.800" fill="#fff" />
  </Svg>
);

const Pages = () => (
  <Svg>
    <g transform="rotate(-9 42 44)">
      <rect x="12" y="6" width="60" height="76" fill="#fdfdfd" />
      <rect x="12" y="5" width="60" height="12" fill="#f7a030" />
      <text x="15" y="15" className="font-['Inter',sans-serif] text-[10px]" fill="#fff" letterSpacing="-.5">PAGES</text>
      <rect x="16" y="24" width="27" height="21" fill="#2b9ae8" />
      <path d="M24 29c1 5 1 9 5 10l-1 6h3l-1-6c4-2 6-6 6-11-3 0-4 1-6 2-2-2-4-2-6-1z" fill="#f58a1c" />
      <path d="M46 26h14M46 29h14M46 32h13M46 35h14M46 38h12M46 41h14M16 49h40M16 52h42M16 55h38M16 61h41M16 64h36M16 67h40M16 70h34" stroke="#9a9a9a" strokeWidth="1" />
    </g>
    <path d="M72 4c3-1 5 0 5 3L62 64l-6-2z" fill="#f5962a" />
    <path d="M75 5L59 63l3 1L77 8z" fill="#c96f12" />
    <path d="M58 62l5 1-4 12-6-2z" fill="#444" />
    <path d="M53 73l5 2-6 10z" fill="#b9c6cf" />
  </Svg>
);

const AppStore = () => (
  <Svg>
    <circle cx="42" cy="44" r="40" fill="#1a45c8" />
    <circle cx="42" cy="42.500" r="38" fill="url(#blueV)" />
    <AppStoreGlyph />
  </Svg>
);

const SystemPrefs = () => (
  <Svg>
    <rect x="2" y="7" width="80" height="74" rx="4" fill="url(#greyV)" />
    <circle cx="42" cy="44" r="33" fill="#2c2c2c" />
    <circle cx="42" cy="44" r="27.500" fill="none" stroke="#a9a9a9" strokeWidth="5" strokeDasharray="2.600 2.160" />
    <circle cx="42" cy="44" r="23" fill="none" stroke="#b2b2b2" strokeWidth="4.500" />
    <circle cx="42" cy="44" r="20" fill="#3c3c3c" />
    <path d="M42 44h22M42 44L31 25M42 44L31 63" stroke="#a9a9a9" strokeWidth="5" />
    <circle cx="42" cy="44" r="4" fill="#ccc" stroke="#777" strokeWidth="1" />
  </Svg>
);

const Terminal = () => (
  <Svg>
    <rect x="2.500" y="9.500" width="79" height="69" rx="4" fill="#050505" stroke="#a9b4bc" strokeWidth="1.500" />
    <rect x="8" y="15" width="68" height="57" fill="#2a2a2a" />
    <path d="M13 19l10 6-10 6" fill="none" stroke="#fff" strokeWidth="3" />
    <path d="M24 34h12" stroke="#fff" strokeWidth="2.500" />
  </Svg>
);

const QuickTime = () => (
  <Svg>
    <path d="M42 3a40 40 0 1 0 18 76l4 5h18V69l-5-5A40 40 0 0 0 42 3z" fill="url(#qt)" />
    <circle cx="42" cy="44" r="26" fill="url(#qtIn)" />
    <path d="M34 42a8 8 0 0 1 15-4l26 34-11 10-22-19z" fill="#4c535c" />
    <path d="M56 66l14-10 8 12-12 10z" fill="#33373b" />
  </Svg>
);

const IntelliJ = () => (
  <Svg>
    <path d="M9 11h33v66H9z" fill="#fe3d75" />
    <path d="M9 36l24 20-2 21H9z" fill="#b25aa5" />
    <path d="M9 36h12v20L9 64z" fill="#e08a4c" />
    <path d="M46 11h29v66H32l20-30z" fill="#1d82f3" />
    <path d="M46 11h29v30L60 34z" fill="#5a74d8" />
    <rect x="16" y="18" width="52" height="52" fill="#050505" />
    <path d="M20.500 27h9M20.500 46h9M25 27v19M35 27h12M43.500 27v14c0 4-4 6-8.500 4" fill="none" stroke="#fff" strokeWidth="3.600" />
    <rect x="21" y="58.500" width="19" height="4" fill="#fff" />
  </Svg>
);

const Calculator = () => (
  <Svg>
    <g transform="rotate(-8 42 44)">
      <rect x="11" y="5" width="61" height="78" rx="2" fill="#c9cacc" />
      <rect x="11" y="5" width="61" height="15" fill="#26302f" />
      <text x="70" y="17" textAnchor="end" className="font-['Inter',sans-serif] text-[11.5px] font-light" fill="#b9c0bf" letterSpacing="-.6">3.141593</text>
      <rect x="57" y="20" width="15" height="63" fill="#f28a1e" />
      <path d="M11 32.500h61M11 45h61M11 57.500h61M11 70h61M26.500 20v50M41.500 20v63M57 20v63" stroke="#8a8b8d" strokeWidth=".8" />
      <g className="font-['Inter',sans-serif] text-[8px]" fill="#66696b" textAnchor="middle">
        <text x="18.500" y="29" className="text-[6px]">AC</text><text x="34" y="29" className="text-[6px]">⁺⁄₋</text><text x="49" y="29" className="text-[6px]">%</text>
        <text x="18.500" y="42">7</text><text x="34" y="42">8</text><text x="49" y="42">9</text>
        <text x="18.500" y="54.500">4</text><text x="34" y="54.500">5</text><text x="49" y="54.500">6</text>
        <text x="18.500" y="67">1</text><text x="34" y="67">2</text><text x="49" y="67">3</text>
        <text x="18.500" y="79.500">0</text><text x="49" y="79">.</text>
      </g>
      <g className="font-['Inter',sans-serif] text-[8px]" fill="#fbd0a0" textAnchor="middle">
        <text x="64.500" y="29">÷</text><text x="64.500" y="42">×</text><text x="64.500" y="54.500">−</text><text x="64.500" y="67">+</text><text x="64.500" y="79.500">=</text>
      </g>
    </g>
  </Svg>
);

const FaceTime = () => (
  <Svg>
    <rect x="5" y="9" width="72" height="64" rx="9" fill="url(#ft)" />
    <rect x="17" y="25" width="34" height="32" rx="6" fill="#f4f6f4" />
    <path d="M53 38l12-11v28l-12-6z" fill="#f4f6f4" />
    <circle cx="66" cy="58.500" r="20" fill="#fafafa" />
    <path d="M58 47c-5 2-3 8 1 13 5 6 13 11 17 8 3-2 1-4-1-6-2-1-3 0-4 1-4-1-7-5-8-9 2-2 1-7-5-7z" fill="#15c940" />
  </Svg>
);

const AppleTv = () => (
  <Svg>
    <circle cx="42" cy="44" r="40" fill="#242424" />
    <circle cx="42" cy="44" r="36" fill="url(#tv)" />
    <svg x="16" y="29" width="23" height="26" viewBox="0 0 384 512" fill="#fff">
      <path d="M318.700 268.700c-.2-36.700 16.400-64.400 50-84.800-18.800-26.900-47.200-41.700-84.700-44.600-35.500-2.800-74.300 20.700-88.500 20.700-15 0-49.400-19.700-76.400-19.700C63.300 141.200 4 184.800 4 273.500q0 39.300 14.400 81.200c12.800 36.700 59 126.700 107.200 125.200 25.200-.6 43-17.900 75.800-17.900 31.800 0 48.300 17.900 76.400 17.900 48.600-.7 90.400-82.500 102.600-119.300-65.200-30.700-61.700-90-61.700-91.900zm-56.600-164.200c27.300-32.400 24.800-61.900 24-72.500-24.100 1.400-52 16.400-67.900 34.900-17.500 19.800-27.800 44.300-25.600 71.900 26.100 2 49.900-11.400 69.500-34.300z" />
    </svg>
    <text x="41" y="54" className="font-['Inter',sans-serif] text-[27px] font-medium" fill="#fff" letterSpacing="-.5">tv</text>
  </Svg>
);

const Music = () => (
  <Svg>
    <circle cx="42" cy="44" r="40" fill="#c9cdd3" />
    <circle cx="42" cy="43.500" r="38" fill="url(#wh)" />
    <path d="M33 24l27-6v42c0 5-3 8-8 8-4 0-6-3-6-6 0-5 5-7 10-7V31l-19 4v31c0 5-4 9-9 9-4 0-7-3-7-6 0-6 6-8 12-8z" transform="translate(0 -1)" fill="url(#note)" />
  </Svg>
);

const VsCode = () => (
  <Svg>
    <path d="M62 4L2 59c-1 2-1 3 0 4l6 5 3-1 51-39z" fill="#0a6cb0" />
    <path d="M11 24l-3-1-6 5c-1 1-1 3 0 4l60 53V60z" fill="#0d84d4" />
    <path d="M61 84l18-9c2-1 3-2 3-4V17c0-2-1-3-3-4L61 4c-1 0 1 2 1 3v74c0 1-2 3-1 3z" fill="#26a1f0" />
  </Svg>
);

const Chrome = () => (
  <Svg>
    <circle cx="42" cy="44" r="40" fill="#fdc943" />
    <path d="M42 44L7.500 24.500A40 40 0 0 1 77 25H42z" fill="#dd4b3e" />
    <path d="M7.500 24.500A40 40 0 0 0 40 84l18-30-16-10z" fill="#1fa05f" />
    <path d="M42 25h35A40 40 0 0 1 41 84l17-31z" fill="#fdc943" />
    <circle cx="42" cy="44" r="19" fill="#f3f5f7" />
    <circle cx="42" cy="44" r="15" fill="#4a83ec" />
  </Svg>
);

const Messages = () => (
  <Svg>
    <path d="M42 7c22 0 40 14 40 32S64 70 42 70l-9-1c-4 6-10 9-17 9 4-4 5-8 5-13C9 59 2 50 2 39 2 21 20 7 42 7z" fill="url(#msg)" />
    <path d="M56 39c13 0 24 9 24 20 0 7-4 12-10 16 0 3 1 5 3 7-5 0-9-2-11-4-17 3-30-6-30-19 0-11 11-20 24-20z" fill="#eef6fd" />
    <circle cx="45" cy="59" r="3.800" fill="#0f5fae" /><circle cx="56.500" cy="59" r="3.800" fill="#0f5fae" /><circle cx="68" cy="59" r="3.800" fill="#0f5fae" />
  </Svg>
);

const Steam = () => (
  <Svg>
    <circle cx="42" cy="44" r="41.500" fill="url(#steam)" />
    <path d="M1 41l21 9c3-2 6-3 10-3l8-14c0-10 6-17 16-17 9 0 16 7 16 16 0 10-8 17-17 17l-13 10c0 8-4 13-12 13-6 0-10-4-11-9L2 55z" fill="#e4e6e8" />
    <circle cx="56" cy="32" r="9.500" fill="#bfc2c6" stroke="#16345e" strokeWidth="3" />
    <path d="M23 65c6 3 12 2 14-4 2-5-1-9-6-11" fill="none" stroke="#16457a" strokeWidth="2.500" />
  </Svg>
);

function OfficeIcon({ letter, shades, tile }: { letter: string; shades: string[]; tile: string }) {
  return (
    <Svg>
      <rect x="20" y="9" width="61" height="18" fill={shades[0]} />
      <rect x="20" y="27" width="61" height="17" fill={shades[1]} />
      <rect x="20" y="44" width="61" height="18" fill={shades[2]} />
      <rect x="20" y="62" width="61" height="17" fill={shades[3]} />
      <rect x="2" y="24" width="40" height="40" rx="3" fill={tile} />
      <text x="22" y="54" textAnchor="middle" className="font-['Open_Sans',sans-serif] text-[29px] font-bold" fill="#fff">{letter}</text>
    </Svg>
  );
}

const Zoom = () => (
  <Svg>
    <rect x="1" y="3" width="82" height="82" rx="24" fill="url(#zm)" />
    <path d="M17 30h26a10 10 0 0 1 10 10v18H26a9 9 0 0 1-9-9z" fill="#fff" />
    <path d="M55 39l12-9v28l-12-9z" fill="#fff" />
  </Svg>
);

const XlsxStack = () => (
  <Svg>
    <path d="M18 0h48v14L80 32v44H4V14h4v-4h10z" fill="#f3f3f3" />
    <path d="M22 3h30v4H22z" fill="#d7d7d7" />
    <path d="M24 9h22v2H24z" fill="#7a2020" />
    <path d="M8 14h44v3H8z" fill="#3a4a60" />
    <path d="M14 24h44v4H14z" fill="#4a76b8" />
    <path d="M14 30h44M14 34h46M14 38h44M8 20v48M11 20v48M40 50v18M40 52h38M40 60h38M40 68h38" stroke="#bfc5cc" strokeWidth="1.200" />
    <path d="M44 56l14-3 18 5" fill="none" stroke="#7b9cd8" strokeWidth="1.500" />
    <path d="M50 0c4 8 14 20 22 38l8 2c0-12-8-26-30-40z" fill="#dcdcdc" />
    <text x="42" y="73" textAnchor="middle" className="font-['Inter',sans-serif] text-[11.5px]" fill="#555">XLSX</text>
  </Svg>
);

const StoreFolder = () => (
  <Svg>
    <circle cx="42" cy="30" r="27" fill="#f2a02c" />
    <circle cx="39" cy="16" r="13" fill="#f2f2f2" />
    <circle cx="72" cy="26" r="5" fill="#5a6580" />
    <circle cx="42" cy="48" r="36" fill="#1a45c8" />
    <circle cx="42" cy="46.500" r="34.500" fill="url(#blueV)" />
    <g transform="translate(5 10) scale(.87)">
      <AppStoreGlyph />
    </g>
  </Svg>
);

const Trash = () => (
  <Svg>
    <path d="M12 16c4-8 10-12 18-11 6-6 14-4 20 0 8-2 16 2 20 10l-6 8H18z" fill="#e9e6e2" />
    <path d="M22 10l8 6 6-9 4 10 9-8 3 10 9-6M18 18l10-6 6 8 10-5 8 5" fill="none" stroke="#555" strokeWidth="2" />
    <path d="M38 9l6 5-7 3z" fill="#d05030" /><path d="M28 12l4 6-6 2z" fill="#3a9ab0" />
    <path d="M10 12c8 8 56 8 64 0l-6 66c-4 9-48 9-52 0z" fill="url(#trash)" opacity=".95" />
    <path d="M10 12c8 8 56 8 64 0" fill="none" stroke="#b9bec1" strokeWidth="1.800" />
    <path d="M24 22l3 55M42 23v57M60 22l-3 55" stroke="#9aa0a3" strokeWidth="1.500" opacity=".5" />
  </Svg>
);

function DockItem({ children, badge, running }: { children: React.ReactNode; badge?: string; running?: boolean }) {
  return (
    <div className="relative flex h-[106px] w-24 shrink-0 flex-col items-center pt-[9px]">
      {children}
      {badge && (
        <span className="absolute right-[2px] top-[7px] flex h-[34px] w-[34px] items-center justify-center rounded-full bg-[#ee3b34] text-[19px] text-white">
          {badge}
        </span>
      )}
      {running && <span className="mt-[4px] h-2 w-2 shrink-0 rounded-full bg-[#9aa0aa]" />}
    </div>
  );
}

function Dock() {
  return (
    <div className="absolute left-[190px] top-[1685px] flex h-[120px] w-[2501px] rounded-t-[12px] border-2 border-[#474d56] bg-[#151c2a] pl-[4px] shadow-[0_0_90px_rgba(0,0,0,0.2)]">
      <DockItem running><Finder /></DockItem>
      <DockItem><Launchpad /></DockItem>
      <DockItem running><Safari /></DockItem>
      <DockItem><Calendar /></DockItem>
      <DockItem><Photos /></DockItem>
      <DockItem><Pages /></DockItem>
      <DockItem badge="5"><AppStore /></DockItem>
      <DockItem><SystemPrefs /></DockItem>
      <DockItem running><Terminal /></DockItem>
      <DockItem><QuickTime /></DockItem>
      <DockItem><IntelliJ /></DockItem>
      <DockItem><Calculator /></DockItem>
      <DockItem badge="7"><FaceTime /></DockItem>
      <DockItem><AppleTv /></DockItem>
      <DockItem running><Music /></DockItem>
      <DockItem><VsCode /></DockItem>
      <DockItem running><Chrome /></DockItem>
      <DockItem running><Messages /></DockItem>
      <div className="flex w-11 shrink-0 justify-center pt-[15px]"><span className="h-[82px] w-[2px] bg-[#4a505c]" /></div>
      <DockItem running><Steam /></DockItem>
      <DockItem running><OfficeIcon letter="W" shades={["#41a5ee", "#2b7cd3", "#185abd", "#103f91"]} tile="#1650b4" /></DockItem>
      <DockItem running><OfficeIcon letter="X" shades={["#38c789", "#23a566", "#187e43", "#1b5e37"]} tile="#107c41" /></DockItem>
      <DockItem running><Zoom /></DockItem>
      <div className="flex w-11 shrink-0 justify-center pt-[15px]"><span className="h-[82px] w-[2px] bg-[#4a505c]" /></div>
      <DockItem><XlsxStack /></DockItem>
      <DockItem><StoreFolder /></DockItem>
      <DockItem><Trash /></DockItem>
    </div>
  );
}

/* ---------- Desktop ---------- */

function DesktopLabel({ text, className }: { text: string; className: string }) {
  return <span className={`absolute flex w-24 justify-end whitespace-nowrap text-[24px] font-semibold leading-7 text-[#e2e3e6] ${className}`}>{text}</span>;
}

export default function App() {
  return (
    <div className="relative h-[1800px] w-[2880px] overflow-hidden bg-[#04101f] font-['Inter',sans-serif]">
      <Defs />
      <div className="absolute inset-y-0 left-0 w-1/2 bg-[linear-gradient(to_bottom,#25487c_0px,#25467a_200px,#243f6b_410px,#34507a_440px,#566b84_555px,#3f5d80_562px,#34527a_660px,#1a3358_800px,#10264a_950px,#0a1a35_1150px,#051224_1400px,#030b15_1800px)]" />
      <div className="absolute inset-y-0 right-0 w-1/2 bg-[linear-gradient(to_bottom,#03133a_0px,#061b40_150px,#12305a_550px,#183c62_562px,#183a60_740px,#142c50_900px,#16294c_1050px,#0c1c38_1250px,#081424_1500px,#050e1a_1800px)]" />

      <DesktopLabel text="Scans" className="left-[2750px] top-[206px]" />
      <DesktopLabel text="Plan" className="left-[2749px] top-[429px]" />
      <DesktopLabel text="Files" className="left-[2744px] top-[653px]" />

      <div className="absolute left-[68px] top-[50px] h-[1638px] w-[2756px] rounded-[12px] shadow-[0_0_0_2px_#05080f,0_16px_50px_rgba(0,0,0,0.5)]" />
      <div className="absolute inset-x-0 top-0">
        <MenuBar />
      </div>
      <BrowserWindow />
      <ShareBanner />
      <Dock />
      <div className="pointer-events-none absolute inset-0 border-[10px] border-[#8dbe38]" />
    </div>
  );
}
